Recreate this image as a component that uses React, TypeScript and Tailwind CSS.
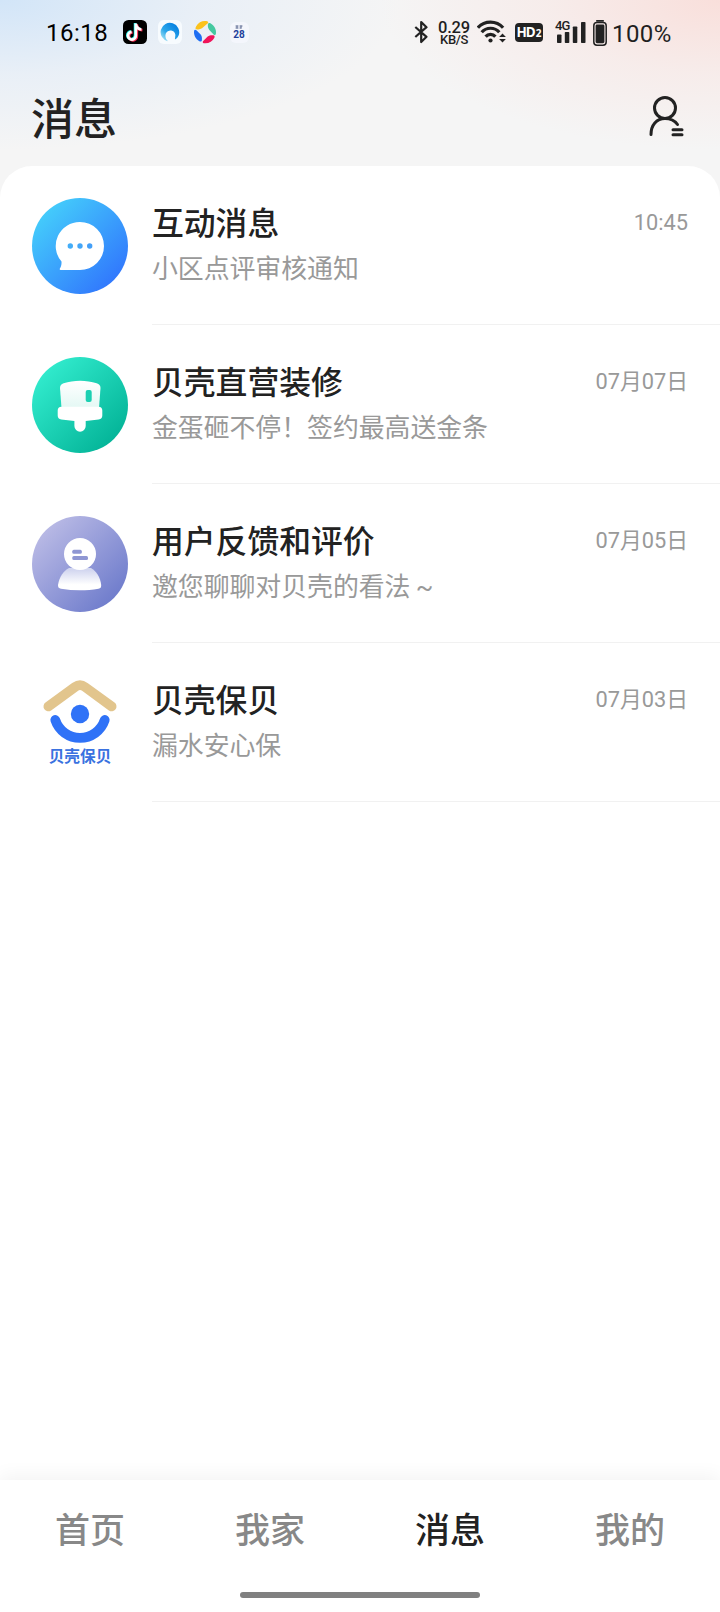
import React from 'react';

interface Message {
  title: string;
  summary: string;
  time: string;
  avatar: React.ReactNode;
}

const ChatAvatar = () => (
  <svg viewBox="0 0 96 96" className="w-24 h-24">
    <defs>
      <linearGradient id="chat" x1="0.1" y1="0.1" x2="0.9" y2="0.9">
        <stop offset="0" stopColor="#45d0fb" />
        <stop offset="1" stopColor="#3074fd" />
      </linearGradient>
    </defs>
    <circle cx="48" cy="48" r="48" fill="url(#chat)" />
    <path d="M48 24a24 24 0 0 1 0 48H28.6c-.9 0-1.1-.8-.7-1.5 1.2-2.2 1.800-4 1.600-6.900A24 24 0 0 1 48 24Z" fill="#fff" />
    <circle cx="38.3" cy="48" r="2.700" fill="#43adf8" />
    <circle cx="48" cy="48" r="2.700" fill="#43a6f8" />
    <circle cx="57.7" cy="48" r="2.700" fill="#439ff8" />
  </svg>
);

const BrushAvatar = () => (
  <svg viewBox="0 0 96 96" className="w-24 h-24">
    <defs>
      <linearGradient id="brush" x1="0.1" y1="0.1" x2="0.9" y2="0.9">
        <stop offset="0" stopColor="#33edcf" />
        <stop offset="1" stopColor="#02b296" />
      </linearGradient>
      <linearGradient id="brushTop" x1="0" y1="0" x2="0" y2="1">
        <stop offset="0" stopColor="#fff" />
        <stop offset="1" stopColor="#e4f8f4" />
      </linearGradient>
    </defs>
    <circle cx="48" cy="48" r="48" fill="url(#brush)" />
    <path d="M28 31c0-2.500 1.300-4 3.600-4.800 10-3.400 23-3.400 33 0 2.600.9 3.900 2.300 3.900 4.800L67 51H29.500Z" fill="url(#brushTop)" />
    <rect x="53.700" y="33" width="6" height="12" rx="2" fill="#1cd0b2" />
    <path d="M29.500 49.700h37a3.800 3.800 0 0 1 3.800 3.800v5c0 2.400-1.200 3.600-3.600 4L53.700 64v5a5.600 5.600 0 0 1-11.300 0v-5l-13.100-1.500c-2.400-.4-3.600-1.600-3.600-4v-5a3.800 3.800 0 0 1 3.800-3.800Z" fill="#fff" />
  </svg>
);

const UserAvatar = () => (
  <svg viewBox="0 0 96 96" className="w-24 h-24">
    <defs>
      <linearGradient id="user" x1="0.1" y1="0.1" x2="0.9" y2="0.9">
        <stop offset="0" stopColor="#bcbce6" />
        <stop offset="1" stopColor="#6c7acb" />
      </linearGradient>
      <linearGradient id="userBody" x1="0" y1="0" x2="0" y2="1">
        <stop offset="0.1" stopColor="#d3d7f0" />
        <stop offset="0.75" stopColor="#fff" />
      </linearGradient>
    </defs>
    <circle cx="48" cy="48" r="48" fill="url(#user)" />
    <path d="M37 52h22c5 3 9.200 8.500 10.200 17 .2 2-.7 3.200-2.700 3.700-12 2-25 2-37.500 0-2-.5-3.300-1.700-3-3.700C27.300 60.500 31.500 55 37 52Z" fill="url(#userBody)" />
    <circle cx="48" cy="38" r="16" fill="#fff" />
    <rect x="40.300" y="33.700" width="9.500" height="4" rx="1.500" fill="#8f97d3" />
    <rect x="40.300" y="40" width="15.700" height="4" rx="1.500" fill="#8f97d3" />
  </svg>
);

const BaobeiAvatar = () => (
  <svg viewBox="0 0 96 96" className="w-24 h-24">
    <path d="M16.300 31.500 43 12Q48 8.200 53 12L79.700 31.500" fill="none" stroke="#e2c58d" strokeWidth="9.600" strokeLinecap="round" />
    <circle cx="48" cy="39" r="9.200" fill="#2f72f7" />
    <path d="M23.300 45a26 26 0 0 0 49.400 0" fill="none" stroke="#2f72f7" strokeWidth="9.800" strokeLinecap="round" />
    <text x="48" y="87" textAnchor="middle" className="text-[15.700px] font-bold" fill="#3a72e0">
      贝壳保贝
    </text>
  </svg>
);

const messages: Message[] = [
  { title: '互动消息', summary: '小区点评审核通知', time: '10:45', avatar: <ChatAvatar /> },
  { title: '贝壳直营装修', summary: '金蛋砸不停！签约最高送金条', time: '07月07日', avatar: <BrushAvatar /> },
  { title: '用户反馈和评价', summary: '邀您聊聊对贝壳的看法 ~', time: '07月05日', avatar: <UserAvatar /> },
  { title: '贝壳保贝', summary: '漏水安心保', time: '07月03日', avatar: <BaobeiAvatar /> },
];

const tabs = ['首页', '我家', '消息', '我的'];

const StatusBar = () => (
  <div className="flex items-center h-16 pl-[46px] pr-[46px] text-black">
    <span className="w-[77px] mt-[2px] text-[24px] leading-none tracking-[0.5px]">16:18</span>

    <div className="flex items-center gap-[11px]">
      <svg viewBox="0 0 24 24" className="w-6 h-6">
        <rect width="24" height="24" rx="5.500" fill="#000" />
        <g fill="none" strokeWidth="2.700">
          <path d="M12.800 3.500v12.200a3.900 3.900 0 1 1-4.200-3.900M12.800 4c.5 3 2.400 5.200 5.600 5.500" stroke="#25f4ee" transform="translate(-.7 -.5)" />
          <path d="M12.800 3.500v12.200a3.900 3.900 0 1 1-4.200-3.900M12.800 4c.5 3 2.400 5.200 5.600 5.500" stroke="#fe2c55" transform="translate(1 .7)" />
          <path d="M12.800 3.500v12.200a3.900 3.900 0 1 1-4.200-3.900M12.800 4c.5 3 2.400 5.200 5.600 5.500" stroke="#fff" />
        </g>
      </svg>
      <svg viewBox="0 0 24 24" className="w-6 h-6">
        <defs>
          <linearGradient id="browser" x1="1" y1="0" x2="0" y2="1">
            <stop offset="0.2" stopColor="#0c86e2" />
            <stop offset="0.6" stopColor="#2ca8ea" />
            <stop offset="1" stopColor="#c4f4f6" />
          </linearGradient>
        </defs>
        <rect width="24" height="24" rx="6" fill="#f7fbfe" />
        <path d="M10 21.300A9.300 9.300 0 1 1 20.600 15.500c-.8 2-2 3.200-3.600 4-.3-1.600.6-3 .3-5A5 5 0 0 0 8 13c-1.200 2.800-.6 6 2 8.300Z" fill="url(#browser)" />
      </svg>
      <svg viewBox="0 0 24 24" className="w-6 h-6">
        <path d="M3.400 9.200C2 9 2.500 7.500 3.200 6.200 5.500 2 10 .3 14.200 1.300c1.300.4 1.300 1.500.3 2.300L9 8.300c-1.800 1.200-3.600 1.300-5.600.9Z" fill="#fbc21c" />
        <path d="M14.900 4.500c.2-1.400 1.300-1.900 2.500-1.200 4 2.300 6.200 6.300 5.500 10.700-.3 1.300-1.500 1.300-2.300.5l-4.300-4.600c-1.300-1.700-1.600-3.500-1.400-5.400Z" fill="#45c9a0" />
        <path d="M20.200 15.300c1.400.1 1.700 1.300 1.200 2.500-1.900 3.900-5.700 6-10.500 5.500-1.300-.2-1.500-1.300-.7-2.200l4.500-4.500c1.700-1.300 3.500-1.500 5.500-1.300Z" fill="#f0145a" />
        <path d="M8.900 19.900c0 1.400-1.200 1.900-2.500 1.300C2.500 19 .5 15 1.100 10.800c.3-1.300 1.500-1.400 2.300-.6l4.300 4.400c1.200 1.700 1.400 3.400 1.200 5.300Z" fill="#1f6ef2" />
      </svg>
      <div className="flex flex-col items-center justify-center w-[22px] h-6">
        <div className="flex flex-col items-center justify-center w-[19px] h-[21px] rounded-md bg-[#f4f6fc] text-[#23409b] font-bold">
          <svg viewBox="0 0 8 4" className="w-2 h-1">
            <path d="M.5 1h3M.5 3h3M2 .5v3M4.500 1h3M4.500 3h2M6 .5v3" stroke="#4c5a86" strokeWidth=".8" />
          </svg>
          <span className="text-[10px] leading-[11px]">28</span>
        </div>
      </div>
    </div>

    <div className="flex items-center ml-auto text-[#1f1f1f]">
      <svg viewBox="0 0 14 24" className="w-[14px] h-6">
        <path d="M1.300 7 12.500 16.800 7.200 22V2l5.300 5.200L1.300 17" fill="none" stroke="#222" strokeWidth="2.200" strokeLinejoin="round" />
      </svg>
      <div className="flex flex-col items-center w-[34px] ml-[9px] mt-[3px] font-medium">
        <span className="text-[16.500px] leading-[12px] tracking-[-0.2px]">0.29</span>
        <span className="text-[13px] leading-[12px] tracking-[-0.4px]">KB/S</span>
      </div>
      <svg viewBox="0 0 30 24" className="w-[30px] h-6 ml-[6px]">
        <g fill="none" stroke="#222" strokeWidth="3.200">
          <path d="M.9 7.700a17 17 0 0 1 25.200 0" />
          <path d="M4.700 12.300a11.600 11.600 0 0 1 17.600 0" />
          <path d="M8.600 16.600a6.400 6.400 0 0 1 9.800 0" />
        </g>
        <circle cx="13.500" cy="20.500" r="2.100" fill="#222" />
        <path d="M25.500 13.500 28.900 17h-6.800ZM25.500 22.500l3.400-3.500h-6.800Z" fill="#222" />
      </svg>
      <div className="flex items-baseline justify-center w-7 h-[19px] ml-2 rounded bg-[#222] text-white font-['Noto_Sans'] font-bold">
        <span className="text-[13.500px] leading-[18px] tracking-[-1px]">HD</span>
        <span className="ml-px text-[10px] leading-[18px]">2</span>
      </div>
      <div className="relative w-[31px] h-[22px] ml-3">
        <svg viewBox="0 0 31 22" className="w-[31px] h-[22px]">
          <g fill="#222">
            <rect x="2" y="13.500" width="4.500" height="8.500" rx=".8" />
            <rect x="9.800" y="11" width="4.500" height="11" rx=".8" />
            <rect x="17.800" y="5.500" width="4.500" height="16.500" rx=".8" />
            <rect x="26" y="1" width="4.500" height="21" rx=".8" />
          </g>
        </svg>
        <span className="absolute left-0 -top-px text-[13px] leading-[12px] font-medium tracking-[-0.8px]">4G</span>
      </div>
      <svg viewBox="0 0 14 26" className="w-[14px] h-[26px] ml-[7px] mt-px">
        <rect x="3" y="0" width="8" height="1.700" rx=".8" fill="#222" />
        <rect x=".8" y="2.600" width="12.400" height="22.600" rx="3.200" fill="none" stroke="#222" strokeWidth="1.500" />
        <rect x="2.600" y="4.600" width="8.800" height="18.600" rx="1.400" fill="#222" />
      </svg>
      <span className="w-[62px] ml-[5px] mt-[3px] text-[24px] leading-none tracking-[0.4px]">100%</span>
    </div>
  </div>
);

const MessageRow: React.FC<{ message: Message }> = ({ message }) => (
  <div className="flex h-[159px] pl-8">
    <div className="shrink-0 mt-8">{message.avatar}</div>
    <div className="flex flex-1 justify-between ml-6 pt-[38px] pr-8 border-b border-[#f1f1f1]">
      <div className="flex flex-col">
        <h3 className="text-[31.800px] leading-10 font-medium text-[#222]">{message.title}</h3>
        <p className="mt-[9px] text-[25.900px] leading-8 tracking-[-0.050px] [word-spacing:-1px] text-[#999]">{message.summary}</p>
      </div>
      <span className="-mt-px text-[21.800px] leading-10 text-[#999]">{message.time}</span>
    </div>
  </div>
);

const App: React.FC = () => {
  return (
    <div className="flex flex-col w-[720px] h-[1612px] overflow-hidden bg-[#f5f5f5] bg-[radial-gradient(ellipse_400px_150px_at_0_0,#d2e5f8,#e6eef7cc_50%,transparent),radial-gradient(ellipse_340px_150px_at_100%_0,#f9dfdb,#f7eae8cc_50%,transparent)] font-['Roboto','Noto_Sans_CJK_SC',sans-serif]">
      <StatusBar />

      <header className="flex items-center justify-between h-[102px] pl-[31px] pr-[35px]">
        <h1 className="text-[43px] leading-[64px] mt-[9px] font-medium text-[#222]">消息</h1>
        <svg viewBox="0 0 36 42" className="w-9 h-[42px] mt-1">
          <g fill="none" stroke="#222" strokeWidth="3" strokeLinecap="round">
            <circle cx="16" cy="12" r="10.500" />
            <path d="M2 38.500C2 29 7.500 22.500 16 22.500c5.400 0 10 2.500 12.500 6" />
            <path d="M24 33.800h9M24 38.800h9" />
          </g>
        </svg>
      </header>

      <main className="flex-1 rounded-t-[32px] bg-white">
        {messages.map((message) => (
          <MessageRow key={message.title} message={message} />
        ))}
      </main>

      <nav className="flex flex-col h-[132px] bg-white shadow-[0_-4px_18px_rgba(0,0,0,0.05)]">
        <div className="grid grid-cols-4 h-24 pt-1 text-center text-[35px] leading-[96px] font-medium">
          {tabs.map((tab) => (
            <span key={tab} className={tab === '消息' ? 'text-[#222]' : 'text-[#888]'}>
              {tab}
            </span>
          ))}
        </div>
        <div className="w-60 h-1.5 mx-auto mt-4 rounded-full bg-[#808080]" />
      </nav>
    </div>
  );
};

export default App;
